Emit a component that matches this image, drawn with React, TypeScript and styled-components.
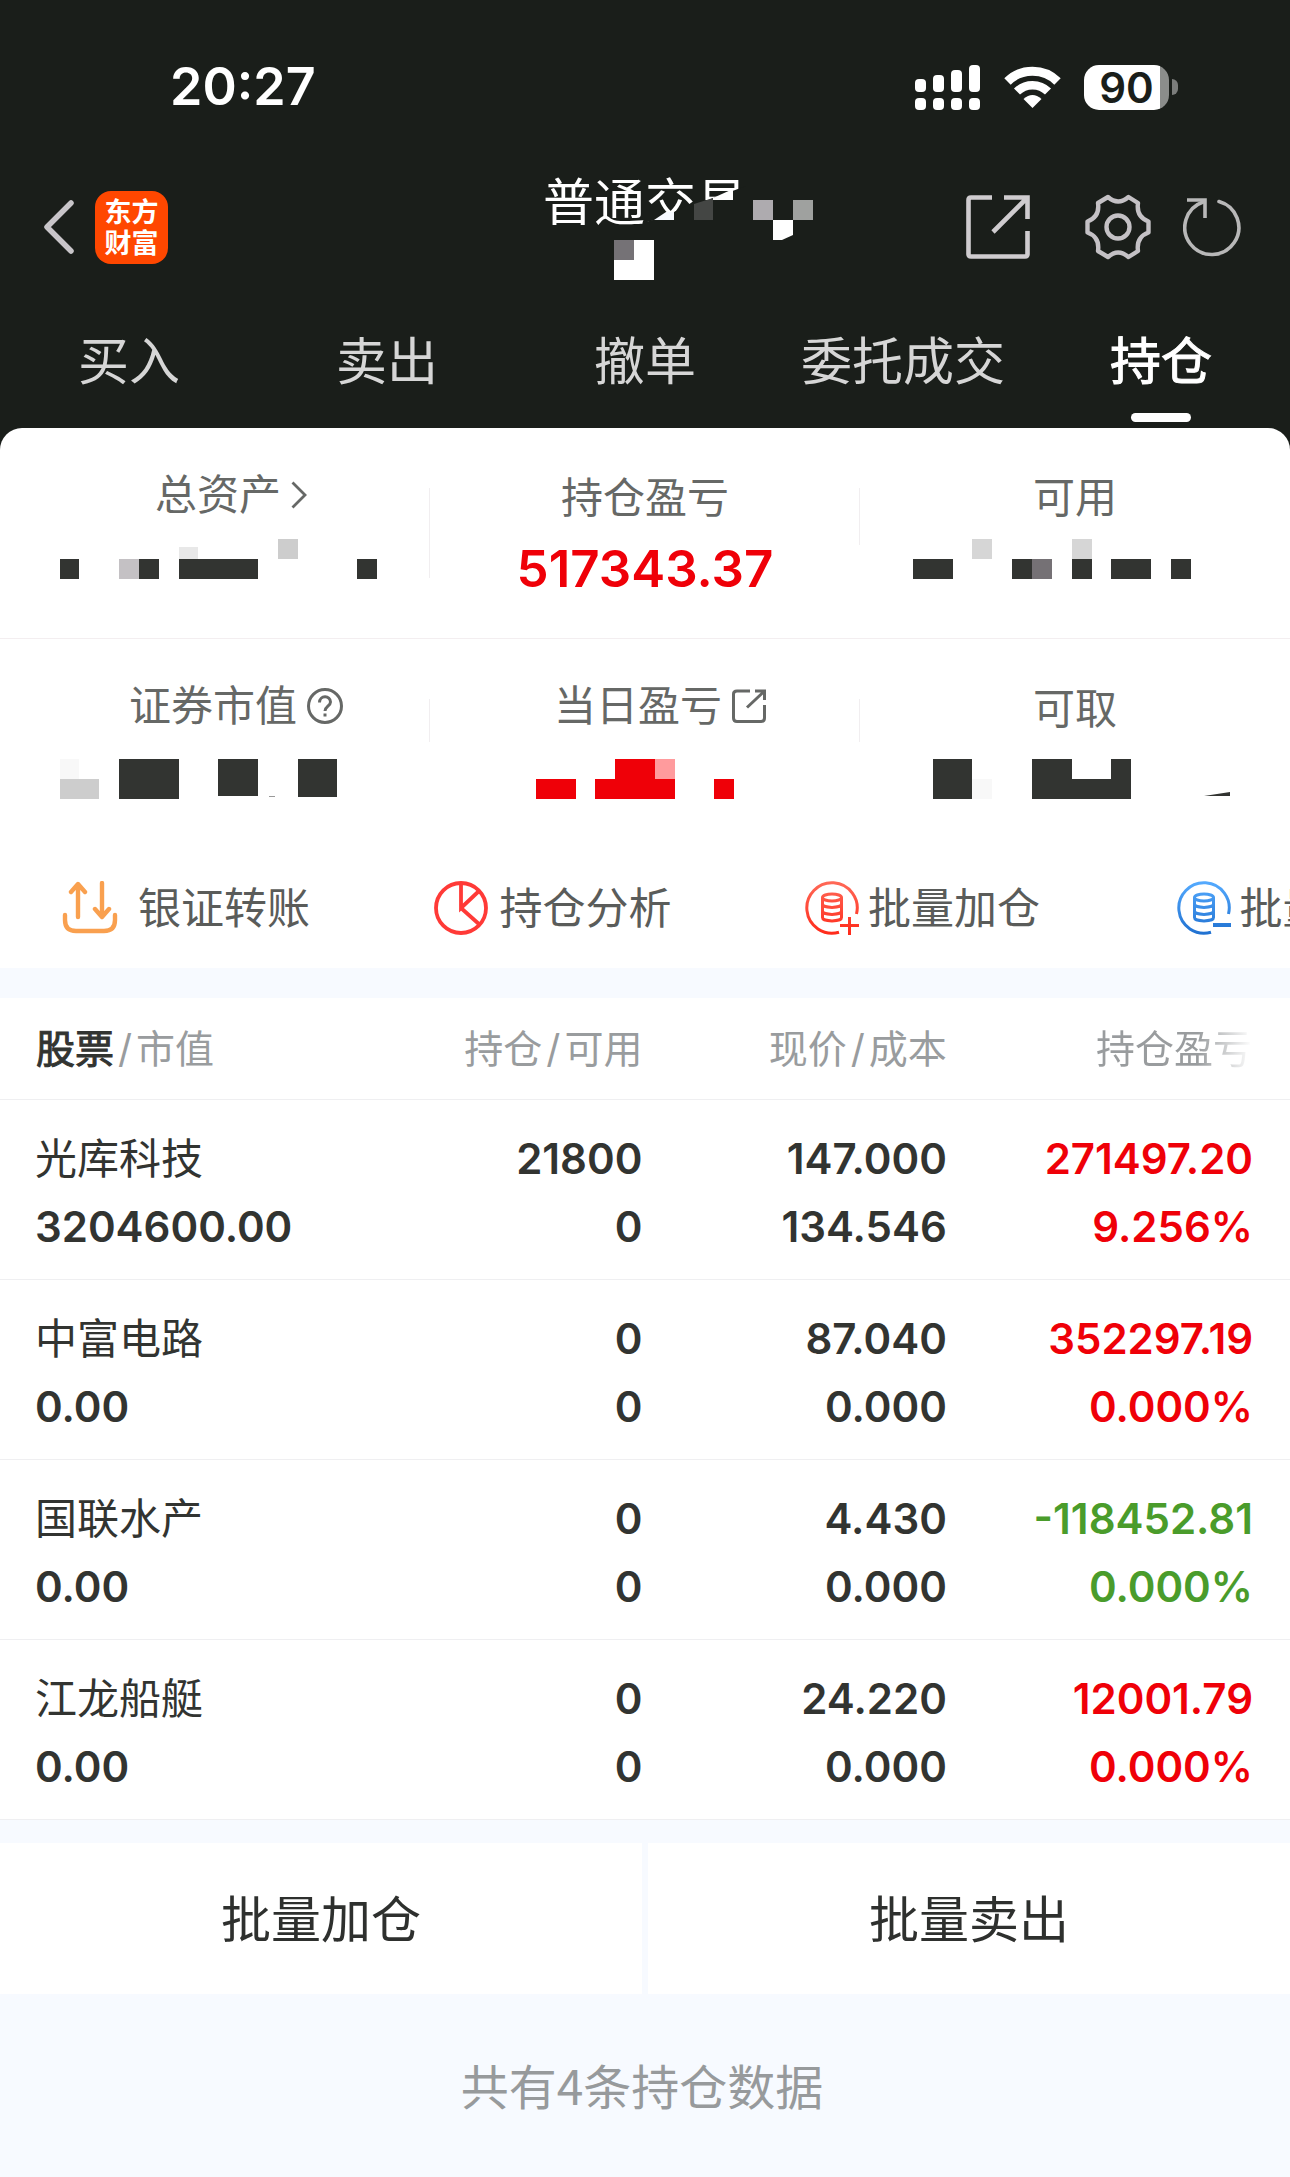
import React from 'react';
import styled, { createGlobalStyle } from 'styled-components';

const DARK = '#1a1e1a';
const INK = '#323431';
const RED = '#ef0008';
const GREEN = '#4a9c2b';
const PALE = '#f7faff';
const LINE = '#efeff1';

const GlobalStyle = createGlobalStyle`
  * { box-sizing: border-box; }
  body {
    margin: 0;
    background: ${PALE};
    font-family: "Inter", "Noto Sans CJK SC", sans-serif;
    color: ${INK};
  }
  button { font: inherit; color: inherit; background: none; border: 0; padding: 0; }
  svg { display: block; flex: none; }
`;

const Top = styled.header`
  background: ${DARK};
  color: #fff;
`;

const StatusBar = styled.div`
  height: 174px;
  padding: 0 112px 0 170px;
  display: flex;
  align-items: center;
  justify-content: space-between;
`;

const Clock = styled.time`
  font-size: 52px;
  line-height: 60px;
  font-weight: 600;
`;

const StatusIcons = styled.div`
  display: flex;
  align-items: center;
  gap: 23px;
`;

const Battery = styled.div`
  display: flex;
  align-items: center;
  gap: 3px;
`;

const BatteryBody = styled.div`
  width: 85px;
  height: 45px;
  border-radius: 15px;
  background: linear-gradient(to right, #fff 76px, #8b8d8b 76px);
  color: ${DARK};
  font-size: 42px;
  line-height: 45px;
  font-weight: 600;
  text-align: center;
`;

const BatteryTip = styled.div`
  width: 6px;
  height: 16px;
  border-radius: 0 8px 8px 0;
  background: #7b7d7b;
`;

const NavBar = styled.div`
  height: 106px;
  padding: 0 44px;
  display: grid;
  grid-template-columns: 1fr 338px 1fr;
  align-items: center;
`;

const NavSide = styled.div<{ $end?: boolean }>`
  display: flex;
  align-items: center;
  justify-content: ${(p) => (p.$end ? 'flex-end' : 'flex-start')};
  gap: ${(p) => (p.$end ? 32 : 21)}px;
  padding-right: ${(p) => (p.$end ? 5 : 0)}px;
`;

const IconButton = styled.button<{ $after?: number }>`
  display: block;
  margin-right: ${(p) => p.$after ?? 0}px;
`;

const Logo = styled.div`
  width: 73px;
  height: 73px;
  border-radius: 16px;
  background: #ff4700;
  font-size: 27px;
  line-height: 31px;
  font-weight: 700;
  text-align: center;
  padding-top: 6px;
`;

const Title = styled.h1`
  position: relative;
  margin: 0;
  height: 106px;
  padding-left: 67px;
  font-size: 51px;
  line-height: 58px;
  font-weight: 400;
  white-space: nowrap;
`;

const TitleMask = styled.svg`
  position: absolute;
  left: 0;
  top: 0;
`;

const Tabs = styled.nav`
  display: grid;
  grid-template-columns: repeat(5, 1fr);
  height: 148px;
`;

const Tab = styled.button<{ $active?: boolean }>`
  display: flex;
  flex-direction: column;
  align-items: center;
  justify-content: flex-end;
  padding-bottom: 6px;
  gap: 21px;
  font-size: 51px;
  line-height: 60px;
  color: ${(p) => (p.$active ? '#fff' : '#d6d6d6')};
  -webkit-text-stroke: ${(p) => (p.$active ? 1 : 0)}px currentColor;
  white-space: nowrap;

  &::after {
    content: '';
    width: 60px;
    height: 9px;
    border-radius: 5px;
    background: ${(p) => (p.$active ? '#fff' : 'transparent')};
  }
`;

const Corner = styled.div`
  background: ${DARK};
`;

const Summary = styled.section`
  background: #fff;
  border-radius: 22px 22px 0 0;
`;

const SummaryRow = styled.div`
  display: grid;
  grid-template-columns: repeat(3, 1fr);
  height: 210px;

  & + & { border-top: 1px solid #f3eef0; }
`;

const Cell = styled.div<{ $rule: number }>`
  display: flex;
  flex-direction: column;
  align-items: center;
  padding-top: 46px;
  background: linear-gradient(#f1eef0, #f1eef0) no-repeat right 60px / 1px ${(p) => p.$rule}px;

  &:last-child { background: none; }
`;

const Label = styled.div<{ $icon?: boolean }>`
  display: flex;
  align-items: center;
  font-size: 42px;
  line-height: ${(p) => (p.$icon ? 42 : 48)}px;
  margin-bottom: ${(p) => (p.$icon ? 23 : 17)}px;
  color: #666866;
  white-space: nowrap;
`;

const Hanging = styled.span<{ $over: number }>`
  margin-left: 10px;
  margin-right: ${(p) => -p.$over}px;
`;

const Value = styled.div`
  height: 58px;
  font-size: 51px;
  line-height: 60px;
  font-weight: 600;
  color: ${RED};
`;

const Tools = styled.div`
  display: flex;
  height: 120px;
  overflow: hidden;
`;

const Tool = styled.button<{ $gap: number }>`
  flex: 0 0 28.8%;
  padding-left: 62px;
  display: flex;
  align-items: center;
  gap: ${(p) => p.$gap}px;
  font-size: 43px;
  line-height: 48px;
  color: #5a5c5a;
  white-space: nowrap;
`;

const Holdings = styled.table`
  width: 100%;
  margin-top: 30px;
  table-layout: fixed;
  border-collapse: separate;
  border-spacing: 0;
  background: #fff;
`;

const HeadCell = styled.th<{ $left?: boolean }>`
  height: 102px;
  padding: 0;
  border-bottom: 1px solid ${LINE};
  font-size: 39px;
  line-height: 48px;
  font-weight: 400;
  color: #999c9e;
  white-space: nowrap;
  text-align: ${(p) => (p.$left ? 'left' : 'right')};

  &:first-child { padding-left: 36px; }
  &:last-child { padding-right: 38px; }
`;

const Strong = styled.span`
  color: ${INK};
  -webkit-text-stroke: 1px currentColor;
`;

const Slash = styled.span`
  padding: 0 4px;
`;

const Faded = styled.span`
  color: transparent;
  background: linear-gradient(to right, #999c9e 65%, #fff 100%);
  background-clip: text;
`;

const DataCell = styled.td<{ $tone?: string; $left?: boolean }>`
  height: 180px;
  padding: 25px 0 18px;
  border-bottom: 1px solid ${LINE};
  font-size: 42px;
  line-height: 68px;
  font-weight: 600;
  color: ${(p) => p.$tone ?? INK};
  text-align: ${(p) => (p.$left ? 'left' : 'right')};
  white-space: nowrap;

  &:first-child { padding-left: 35px; }
  &:last-child { padding-right: 37px; }
`;

const Name = styled.div`
  font-weight: 400;
`;

const Actions = styled.div`
  display: grid;
  grid-template-columns: 1fr 1fr;
  gap: 6px;
  margin-top: 23px;
`;

const Action = styled.button`
  height: 151px;
  padding-top: 2px;
  background: #fff;
  font-size: 50px;
  line-height: 60px;
  color: #2e302e;
`;

const Footer = styled.p`
  margin: 0;
  padding: 60px 6px 63px 0;
  font-family: "Noto Sans CJK SC", sans-serif;
  font-size: 48px;
  line-height: 60px;
  text-align: center;
  color: #979a9c;
`;

type Block = [x: number, y: number, w: number, h: number, fill?: string];

const Mosaic = ({ blocks, children }: { blocks: Block[]; children?: React.ReactNode }) => (
  <svg width="430" height="58" viewBox="0 0 430 58" aria-hidden="true" shapeRendering="crispEdges">
    {blocks.map(([x, y, w, h, fill = INK], i) => (
      <rect key={i} x={x} y={y} width={w} height={h} fill={fill} />
    ))}
    {children}
  </svg>
);

const TOTAL: Block[] = [
  [60, 20, 19, 20], [119, 20, 20, 20, '#c4c1c4'], [139, 20, 20, 20], [179, 20, 79, 20],
  [179, 8, 19, 12, '#e8e8e8'], [278, 0, 20, 20, '#cdcdcd'], [357, 20, 20, 20],
];
const AVAILABLE: Block[] = [
  [53, 20, 40, 20], [112, 0, 20, 20, '#d6d6d6'], [152, 20, 20, 20], [172, 20, 20, 20, '#757175'],
  [212, 0, 20, 20, '#d6d6d6'], [212, 20, 20, 20], [251, 20, 40, 20], [311, 20, 20, 20],
];
const MARKET: Block[] = [
  [60, 9, 19, 20, '#f8f8f8'], [60, 29, 39, 20, '#cdcdcd'], [119, 9, 60, 40],
  [218, 9, 40, 37], [298, 9, 39, 38], [269, 46, 6, 1, '#999'],
];
const TODAY: Block[] = [
  [106, 29, 40, 20, RED], [165, 29, 80, 20, RED], [185, 9, 40, 20, RED],
  [225, 9, 20, 20, '#ff9b9d'], [284, 29, 20, 20, RED],
];
const WITHDRAW: Block[] = [
  [73, 9, 39, 40], [112, 29, 20, 20, '#f8f8f8'], [172, 9, 40, 40], [212, 29, 39, 20], [251, 9, 20, 40],
];

const Signal = () => (
  <svg width="66" height="45" viewBox="0 0 66 45" fill="#fff" aria-hidden="true">
    {[14, 10, 5, 0].map((y, i) => (
      <React.Fragment key={y}>
        <rect x={i * 18} y={y} width="11" height={27 - y} rx="4" />
        <rect x={i * 18} y="33" width="11" height="12" rx="4" />
      </React.Fragment>
    ))}
  </svg>
);

const Wifi = () => (
  <svg width="57" height="43" viewBox="0 0 57 43" fill="none" stroke="#fff" aria-hidden="true">
    <path d="M3.5 15.5C17 1.8 40 1.8 53.5 15.5" strokeWidth="9" />
    <path d="M13 25.5C21.5 17 35.5 17 44 25.5" strokeWidth="8.5" />
    <path d="M28.5 42 19.5 33Q28.5 25 37.5 33Z" fill="#fff" stroke="none" />
  </svg>
);

const Back = () => (
  <svg width="30" height="54" viewBox="0 0 30 54" fill="none" stroke="#c8c5c9" strokeWidth="5.5" strokeLinecap="round" strokeLinejoin="round" aria-hidden="true">
    <path d="M27 3 3 27 27 51" />
  </svg>
);

const Share = () => (
  <svg width="64" height="64" viewBox="0 0 64 64" fill="none" stroke="#cfcccf" strokeWidth="4.6" aria-hidden="true">
    <path d="M26 2.5H5Q2.5 2.5 2.5 5V59Q2.5 61.5 5 61.5H59Q61.5 61.5 61.5 59V36" />
    <path d="M38 2.5H61.5V24M61 3 27 37" />
  </svg>
);

const Gear = () => (
  <svg width="66" height="66" viewBox="0 0 66 66" fill="none" stroke="#c4c1c5" strokeWidth="4.4" strokeLinejoin="round" aria-hidden="true">
    <path d="M23 3Q33 12 43.5 3L53 9Q51 23 63.5 27.5V38.5Q51 43 53 57L43.5 63Q33 54 23 63L13 57Q15 43 2.5 38.5V27.5Q15 23 13 9Z" />
    <circle cx="33" cy="33" r="11.5" />
  </svg>
);

const Refresh = () => (
  <svg width="58" height="60" viewBox="0 0 58 60" fill="none" stroke="#b8b8b8" strokeWidth="3.6" aria-hidden="true">
    <path d="M36 4.5A27 27 0 1 1 20 5" strokeLinecap="round" />
    <path d="M4 3H22V21" />
  </svg>
);

const Chevron = () => (
  <svg width="16" height="28" viewBox="0 0 16 28" fill="none" stroke="#666866" strokeWidth="2.8" aria-hidden="true">
    <path d="M1.5 1.5 14 14 1.5 26.5" />
  </svg>
);

const Help = () => (
  <svg width="36" height="36" viewBox="0 0 36 36" fill="none" stroke="#666866" strokeWidth="3" aria-hidden="true">
    <circle cx="18" cy="18" r="16.5" />
    <path d="M12.5 14.5C12.5 7 23.5 7 23.5 14C23.5 18 18 18.5 18 23" />
    <path d="M18 25.5V28.5" />
  </svg>
);

const Open = () => (
  <svg width="34" height="34" viewBox="0 0 34 34" fill="none" stroke="#666866" strokeWidth="3" aria-hidden="true">
    <path d="M18 2H5Q1.5 2 1.5 5V29Q1.5 32.5 5 32.5H29Q32.5 32.5 32.5 29V16" />
    <path d="M23 2H32.5V11M32 2.5 15 18.5" />
  </svg>
);

const Transfer = () => (
  <svg width="56" height="54" viewBox="0 0 56 54" fill="none" stroke="#f9a04f" strokeWidth="4.4" strokeLinecap="round" aria-hidden="true">
    <path d="M3 34V39Q3 50 14 50H42Q53 50 53 39V34" />
    <path d="M16 36V4M9 11 16 3 23 11M40 2V34M33 28 40 36 47 28" strokeLinejoin="round" />
  </svg>
);

const Pie = () => (
  <svg width="54" height="54" viewBox="0 0 54 54" fill="none" stroke="#ff3a37" strokeWidth="3.8" aria-hidden="true">
    <circle cx="27" cy="27" r="25" />
    <path d="M27 2V27L45 10M27 27 46 44" />
  </svg>
);

const Coins = ({ sign }: { sign: '+' | '-' }) => {
  const id = sign === '+' ? 'coins-add' : 'coins-cut';
  const [from, to] = sign === '+' ? ['#ff6a58', '#ff2a1a'] : ['#55abff', '#1f70d0'];
  return (
    <svg width="54" height="54" viewBox="0 0 54 54" fill="none" stroke={`url(#${id})`} strokeWidth="3" aria-hidden="true">
      <defs>
        <linearGradient id={id} gradientUnits="userSpaceOnUse" x1="27" y1="0" x2="27" y2="54">
          <stop offset="0" stopColor={from} />
          <stop offset="1" stopColor={to} />
        </linearGradient>
      </defs>
      <path d="M51.5 33A25.2 25.2 0 1 0 34 51.2" />
      <ellipse cx="27" cy="16.5" rx="9.5" ry="3.5" />
      <path d="M17.5 16.5V36.5C17.5 41 36.5 41 36.5 36.5V16.5" />
      <path d="M17.5 23C17.5 27.5 36.5 27.5 36.5 23M17.5 30C17.5 34.5 36.5 34.5 36.5 30" />
      {sign === '+' ? <path d="M35 44.5H54M44.5 36V54" /> : <path d="M36 44 54 44.1" strokeWidth="4" />}
    </svg>
  );
};

const TABS = ['买入', '卖出', '撤单', '委托成交', '持仓'];

const STOCKS = [
  { name: '光库科技', value: '3204600.00', held: '21800', free: '0', price: '147.000', cost: '134.546', gain: '271497.20', rate: '9.256%' },
  { name: '中富电路', value: '0.00', held: '0', free: '0', price: '87.040', cost: '0.000', gain: '352297.19', rate: '0.000%' },
  { name: '国联水产', value: '0.00', held: '0', free: '0', price: '4.430', cost: '0.000', gain: '-118452.81', rate: '0.000%' },
  { name: '江龙船艇', value: '0.00', held: '0', free: '0', price: '24.220', cost: '0.000', gain: '12001.79', rate: '0.000%' },
];

export default function App() {
  return (
    <>
      <GlobalStyle />
      <Top>
        <StatusBar>
          <Clock>20:27</Clock>
          <StatusIcons>
            <Signal />
            <Wifi />
            <Battery>
              <BatteryBody>90</BatteryBody>
              <BatteryTip />
            </Battery>
          </StatusIcons>
        </StatusBar>
        <NavBar>
          <NavSide>
            <IconButton aria-label="返回"><Back /></IconButton>
            <Logo>东方<br />财富</Logo>
          </NavSide>
          <Title>
            普通交易
            <TitleMask width="340" height="106" viewBox="0 0 340 106" aria-hidden="true">
              <path d="M170 48 190 42 218 28 232 26 270 12V62H170Z" fill={DARK} />
              <path d="M178 46 190 38H198V46Z" fill="#f7faff" />
              <path d="M218 30 237 24V46H218Z" fill="#444644" />
              <path d="M237 24 257 15V26H237Z" fill="#fff" />
              <rect x="277" y="26" width="20" height="20" fill="#aeabaf" />
              <rect x="317" y="26" width="20" height="20" fill="#9fa19f" />
              <path d="M297 46H317V61L306 66H297Z" fill="#fff" />
              <path d="M138 66H178V106H138Z" fill="#fff" />
              <rect x="138" y="66" width="20" height="20" fill="#757276" />
            </TitleMask>
          </Title>
          <NavSide $end>
            <IconButton aria-label="分享" $after={23}><Share /></IconButton>
            <IconButton aria-label="设置"><Gear /></IconButton>
            <IconButton aria-label="刷新"><Refresh /></IconButton>
          </NavSide>
        </NavBar>
        <Tabs>
          {TABS.map((t) => (
            <Tab key={t} $active={t === '持仓'}>{t}</Tab>
          ))}
        </Tabs>
      </Top>
      <main>
        <Corner>
          <Summary>
            <SummaryRow>
              <Cell $rule={90}>
                <Label $icon>总资产<Hanging $over={32}><Chevron /></Hanging></Label>
                <Mosaic blocks={TOTAL} />
              </Cell>
              <Cell $rule={57}>
                <Label>持仓盈亏</Label>
                <Value>517343.37</Value>
              </Cell>
              <Cell $rule={0}>
                <Label>可用</Label>
                <Mosaic blocks={AVAILABLE} />
              </Cell>
            </SummaryRow>
            <SummaryRow>
              <Cell $rule={43}>
                <Label $icon>证券市值<Hanging $over={42}><Help /></Hanging></Label>
                <Mosaic blocks={MARKET} />
              </Cell>
              <Cell $rule={43}>
                <Label $icon>当日盈亏<Hanging $over={30}><Open /></Hanging></Label>
                <Mosaic blocks={TODAY} />
              </Cell>
              <Cell $rule={0}>
                <Label>可取</Label>
                <Mosaic blocks={WITHDRAW}>
                  <path d="M344 46 370 42V46Z" fill={INK} shapeRendering="auto" />
                </Mosaic>
              </Cell>
            </SummaryRow>
            <Tools>
              <Tool $gap={20}><Transfer />银证转账</Tool>
              <Tool $gap={12}><Pie />持仓分析</Tool>
              <Tool $gap={9}><Coins sign="+" />批量加仓</Tool>
              <Tool $gap={9}><Coins sign="-" />批量卖出</Tool>
            </Tools>
          </Summary>
        </Corner>
        <Holdings>
          <colgroup>
            <col style={{ width: '28%' }} />
            <col style={{ width: '21.8%' }} />
            <col style={{ width: '23.6%' }} />
            <col />
          </colgroup>
          <thead>
            <tr>
              <HeadCell $left scope="col"><Strong>股票</Strong><Slash>/</Slash>市值</HeadCell>
              <HeadCell scope="col">持仓<Slash>/</Slash>可用</HeadCell>
              <HeadCell scope="col">现价<Slash>/</Slash>成本</HeadCell>
              <HeadCell scope="col"><Faded>持仓盈亏</Faded></HeadCell>
            </tr>
          </thead>
          <tbody>
            {STOCKS.map((s) => {
              const tone = s.gain.startsWith('-') ? GREEN : RED;
              return (
                <tr key={s.name}>
                  <DataCell $left><Name>{s.name}</Name><div>{s.value}</div></DataCell>
                  <DataCell><div>{s.held}</div><div>{s.free}</div></DataCell>
                  <DataCell><div>{s.price}</div><div>{s.cost}</div></DataCell>
                  <DataCell $tone={tone}><div>{s.gain}</div><div>{s.rate}</div></DataCell>
                </tr>
              );
            })}
          </tbody>
        </Holdings>
        <Actions>
          <Action>批量加仓</Action>
          <Action>批量卖出</Action>
        </Actions>
        <Footer>共有4条持仓数据</Footer>
      </main>
    </>
  );
}
